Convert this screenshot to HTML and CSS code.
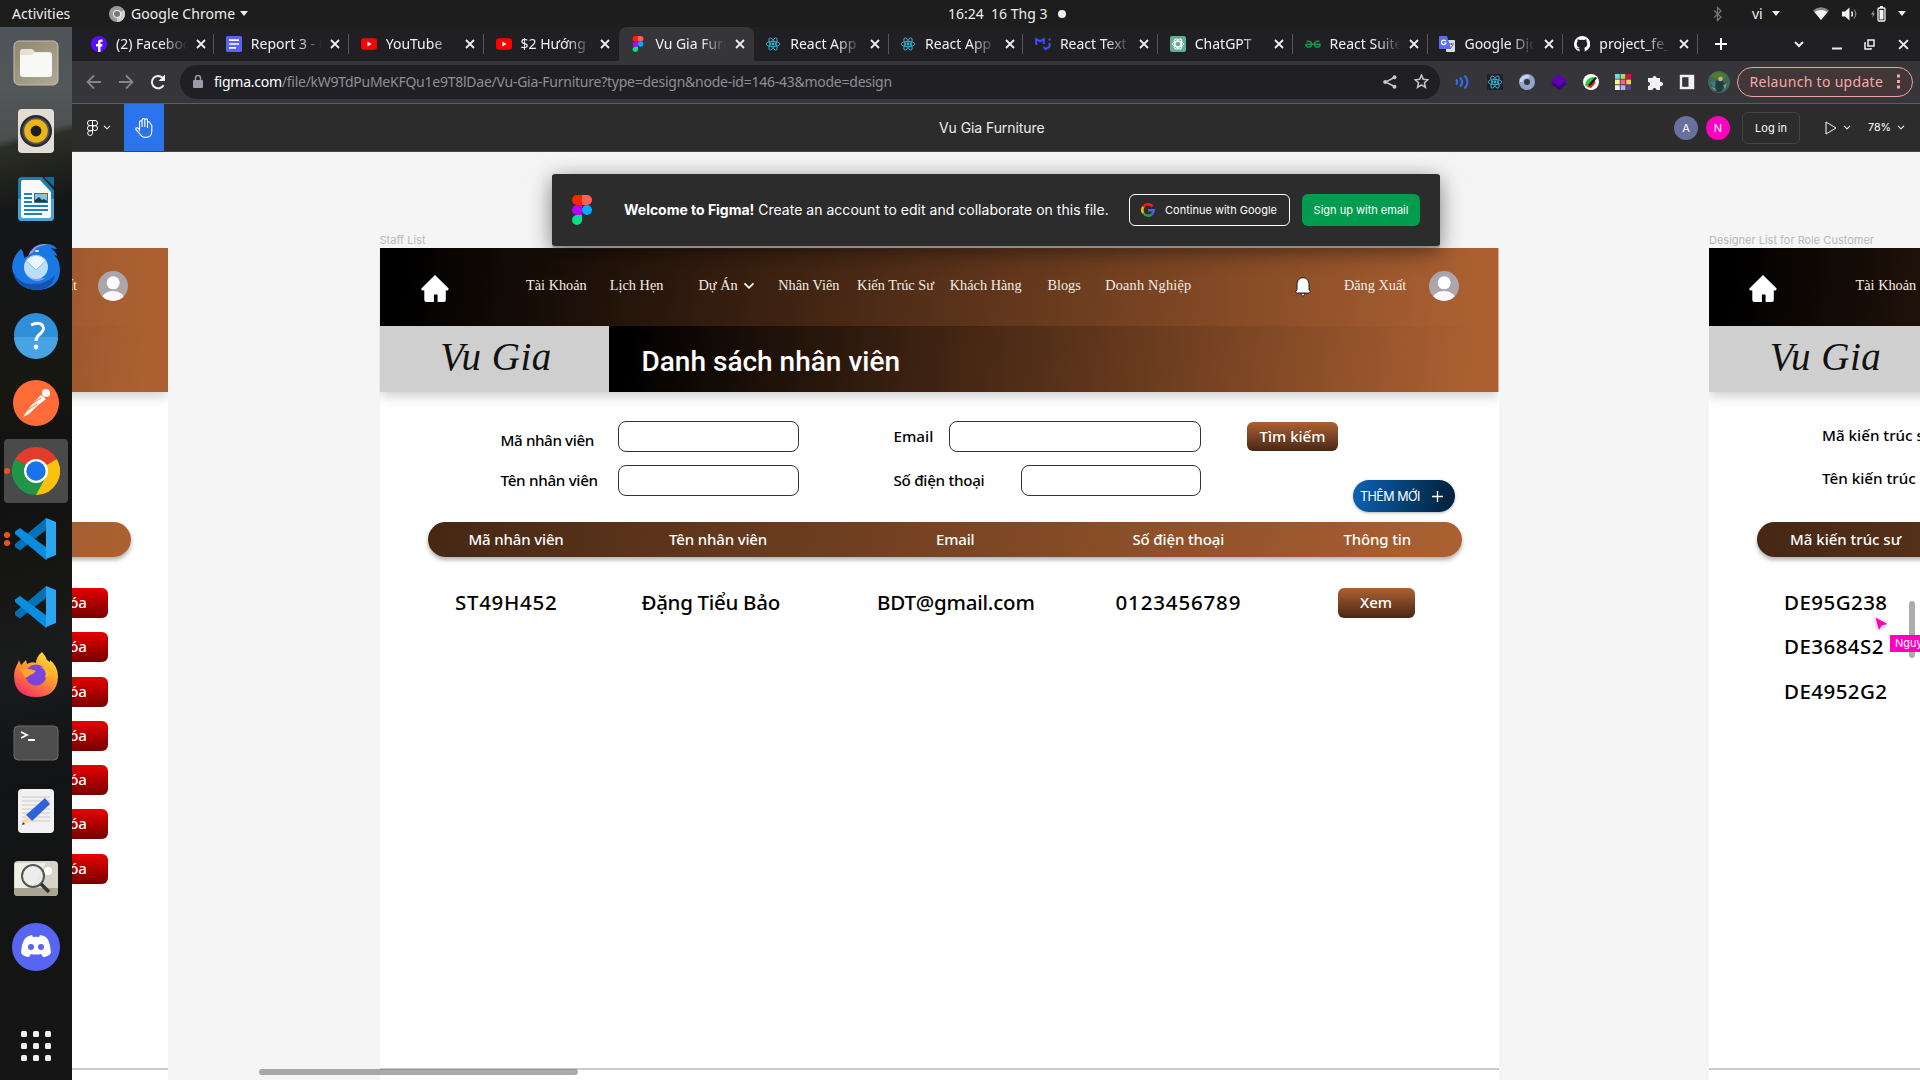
FILE: index.html
```html
<!DOCTYPE html>
<html lang="vi">
<head>
<meta charset="utf-8">
<title>Vu Gia Furniture</title>
<link rel="stylesheet" href="styles.css">
</head>
<body>
<svg class="defs" width="0" height="0">
  <defs>
    <symbol id="close" viewBox="0 0 10 10"><path d="M1 1l8 8M9 1L1 9" stroke="#eee" stroke-width="1.8" fill="none"/></symbol>
    <symbol id="chev" viewBox="0 0 8 5"><path d="M1 .8l3 3 3-3" stroke="currentColor" stroke-width="1.1" fill="none"/></symbol>
    <symbol id="figma" viewBox="0 0 20 30"><path d="M5 0h5v10H5A5 5 0 0 1 5 0z" fill="#ff2400"/><path d="M10 0h5a5 5 0 0 1 0 10h-5z" fill="#ff6058"/><path d="M5 10h5v10H5a5 5 0 0 1 0-10z" fill="#b900ff"/><circle cx="15" cy="15" r="5" fill="#00aeff"/><path d="M5 20h5v5a5 5 0 1 1-5-5z" fill="#00e284"/></symbol>
    <symbol id="react" viewBox="0 0 20 20"><g fill="none" stroke="currentColor" stroke-width="1.1"><ellipse cx="10" cy="10" rx="8.6" ry="3.3"/><ellipse cx="10" cy="10" rx="8.6" ry="3.3" transform="rotate(60 10 10)"/><ellipse cx="10" cy="10" rx="8.6" ry="3.3" transform="rotate(120 10 10)"/></g><circle cx="10" cy="10" r="1.8" fill="currentColor"/></symbol>
    <symbol id="youtube" viewBox="0 0 16 16"><rect y="2.3" width="16" height="11.4" rx="3" fill="#f00"/><path d="M6.4 5.6L10.6 8l-4.2 2.4z" fill="#fff"/></symbol>
    <symbol id="home" viewBox="0 0 28 27"><path d="M14 0L27.4 13.2q.8 1.6-1 2.3h-1.6V25q0 2-2 2h-6.200V19.500h-3.700V27H5.300q-2 0-2-2v-9.500H1.600q-2-.7-1-2.300z" fill="#fff"/></symbol>
    <symbol id="person" viewBox="0 0 30 30"><clipPath id="pc"><circle cx="15" cy="15" r="15"/></clipPath><g clip-path="url(#pc)"><rect width="30" height="30" fill="#aba6ac"/><circle cx="15.200" cy="11.800" r="6.500" fill="#fff"/><ellipse cx="15" cy="28.500" rx="11.500" ry="8.500" fill="#fdf8fd"/></g></symbol>
    <symbol id="vscode" viewBox="0 0 42 42"><path d="M0 29l5 3.500L31 12V0L0 26z" fill="#0670b4"/><path d="M0 13.500L5 10l27 20v11l-1 1L0 16z" fill="#0a8ddc"/><path d="M31 0l10 4v33l-10 4z" fill="#2aa7f0"/></symbol>
  </defs>
</svg>

<header class="topbar">
  <span class="activities">Activities</span>
  <svg class="top-chrome" viewBox="0 0 16 16"><circle cx="8" cy="8" r="8" fill="#999"/><path d="M8 8l7-4a8 8 0 0 1-7 12z" fill="#d0d0d0"/><circle cx="8" cy="8" r="4" fill="#eee"/><circle cx="8" cy="8" r="3" fill="#777"/></svg>
  <span class="app-name">Google Chrome</span>
  <i class="tri"></i>
  <span class="clock">16:24&nbsp; 16 Thg 3</span>
  <i class="dot"></i>
  <div class="tray">
    <svg width="9" height="16" viewBox="0 0 9 16"><path d="M1 4.500l7 6.500-3.500 3.500v-13L8 5l-7 6.500" fill="none" stroke="#777" stroke-width="1.200"/></svg>
    <span class="vi">vi</span><i class="tri"></i>
    <svg class="wifi" width="16" height="13" viewBox="0 0 16 13"><path d="M0 3.500Q8-3 16 3.500L8 13z" fill="#888"/><path d="M1.500 5Q8 1 14.500 5L8 13z" fill="#f2f2f2"/></svg>
    <svg class="vol" width="15" height="14" viewBox="0 0 15 14"><path d="M0 4.500h3L7.500.500v13L3 9.500H0z" fill="#f2f2f2"/><path d="M9.500 4.500q2 2.500 0 5" stroke="#f2f2f2" fill="none" stroke-width="1.400"/><path d="M12 2.500q3.500 4.500 0 9" stroke="#888" fill="none" stroke-width="1.200"/></svg>
    <svg class="bat" width="15" height="16" viewBox="0 0 15 16"><path d="M3 4L0 8.500h2L1 12l3-4.500H2.300z" fill="#999"/><rect x="7" y="2" width="7" height="13" rx="1" fill="none" stroke="#f2f2f2" stroke-width="1.300"/><rect x="8.500" y="4" width="4" height="9.500" fill="#f2f2f2"/><rect x="9" width="3" height="2" fill="#f2f2f2"/></svg>
    <i class="tri"></i>
  </div>
</header>

<div class="desktop">
<aside class="dock">
  <div class="app"><svg viewBox="0 0 48 48"><defs><linearGradient id="fo" x2="1" y2="1"><stop stop-color="#8f876f"/><stop offset="1" stop-color="#b0a894"/></linearGradient></defs><rect x="2" y="2" width="44" height="44" rx="5" fill="url(#fo)" stroke="#c6bfae"/><path d="M8 13q0-3 3-3h8q2 0 4 3h14q3 0 3 3v18H8z" fill="#e4e0d6"/><rect x="8" y="13.500" width="32" height="24.500" rx="3" fill="#f8f8f7"/><path d="M8 16v-3q0-3 3-3h9l3 3.500q-2 2.500-5 2.500z" fill="#e4e0d6"/></svg></div>
  <div class="app"><svg viewBox="0 0 48 48"><rect x="6" y="2" width="36" height="44" rx="4" fill="#e3ded3"/><circle cx="24" cy="24" r="16" fill="#2a2a35"/><circle cx="24" cy="24" r="13.500" fill="#50515c"/><circle cx="24" cy="24" r="11.800" fill="#e9b612"/><circle cx="24" cy="24" r="5.400" fill="#1d1e20"/></svg></div>
  <div class="app"><svg viewBox="0 0 48 48"><path d="M10 2h20l12 13v27q0 4-4 4H10q-4 0-4-4V6q0-4 4-4z" fill="#1a7fb0"/><path d="M6 24h36v18q0 4-4 4H10q-4 0-4-4z" fill="#4aa5d4"/><path d="M32 2h10v10z" fill="#0f6c9c"/><path d="M11 5h17l11 12v24q0 2-2 2H11q-2 0-2-2V7q0-2 2-2z" fill="#fafafa"/><path d="M12 19h8M12 23h8M12 27h8M12 31h24M12 35h24M12 39h18" stroke="#1b82bb" stroke-width="2"/><rect x="22" y="18" width="14" height="10" fill="#1b75ac"/><rect x="23" y="19" width="12" height="8" fill="#7cc5ee"/><path d="M23 27v-2l4-3 3 3 2-1 3 2v1z" fill="#333"/><path d="M31 19h4v3z" fill="#f2c037"/></svg></div>
  <div class="app"><svg viewBox="0 0 48 48"><path d="M1 29C-2 20 4 10 9 6q3 3 3 9l6-3Q24 0 34 1q8 0 11 5-3 0-6-1 6 5 6 8l-3-1q6 5 6 15-1 20-24 20Q6 46 1 29z" fill="#1878e4"/><path d="M1 29q7 13 20 12 14 0 22-9Q40 47 24 47 5 46 1 29z" fill="#1552b4"/><path d="M16 13Q22 -1 36 1.500q-12 1-15 8z" fill="#9f8cf0"/><path d="M12 26q2 10 12 12 5 1 9-3-8 1-13-6z" fill="#8f8cf5"/><circle cx="24" cy="24" r="12" fill="#b9def8"/><path d="M14 17.500l10 9.500 10-9.500q-4-5-10-5.500-6 .5-10 5.500z" fill="#e9f6ff" stroke="#7ab4e4" stroke-width=".8"/><ellipse cx="25" cy="8" rx="2" ry="1" fill="#fff"/></svg></div>
  <div class="app"><svg viewBox="0 0 48 48"><circle cx="24" cy="24" r="22" fill="#2f8fd8"/><path d="M2 26h44a22 22 0 0 1-44 0z" fill="#48a3e2"/><path d="M19 14q6-3 10-1 5 4 0 9-5 4-5 8" fill="none" stroke="#fff" stroke-width="3"/><circle cx="24" cy="36" r="2.400" fill="#fff"/></svg></div>
  <div class="app"><svg viewBox="0 0 48 48"><circle cx="24" cy="24" r="23" fill="#ff6c37"/><circle cx="34" cy="14" r="4" fill="#fff"/><path d="M29 16l5 4-9 7-8 8-6 3 4-6 7-9z" fill="#fff"/><path d="M20 25l9-6M16 31l9-6" stroke="#ff6c37"/></svg></div>
  <div class="app active"><i class="run"></i><svg viewBox="0 0 48 48"><path d="M24 24L3.200 12A24 24 0 0 1 44.800 12z" fill="#e33b2e"/><path d="M24 24h0L44.800 12A24 24 0 0 1 24 48z" fill="#fcc10f"/><path d="M24 24l0 24A24 24 0 0 1 3.200 12z" fill="#239547"/><path d="M34 30L24 48l-5-14z" fill="#239547"/><path d="M24 12h20.800L34 16z" fill="#e33b2e"/><circle cx="24" cy="24" r="12" fill="#fff"/><circle cx="24" cy="24" r="9.700" fill="#1a73e8"/></svg></div>
  <div class="app"><i class="run up"></i><i class="run down"></i><svg class="code"><use href="#vscode"/></svg></div>
  <div class="app"><svg class="code"><use href="#vscode"/></svg></div>
  <div class="app"><svg viewBox="0 0 48 48"><defs><linearGradient id="fx" x1=".8" x2=".2" y2="1"><stop stop-color="#ffe63e"/><stop offset=".45" stop-color="#ff9a2a"/><stop offset="1" stop-color="#f4286a"/></linearGradient></defs><path d="M24 12q0-6 6-11 3 3 5 8l3 2v-2q8 6 8 17-1 20-22 20T2 26q0-8 4-14l1-3 2 5 5-5 1 4q5-3 9-1z" fill="url(#fx)"/><circle cx="24" cy="24" r="10.500" fill="#7a45d8"/><path d="M8 18q9-1 16 2-2 3-6 4-4 4-6 1z" fill="#ffa62e"/><path d="M28 16q8 3 5 11l6-5q-1-6-11-6z" fill="#ffb52c"/></svg></div>
  <div class="app"><svg viewBox="0 0 48 48"><rect x="2" y="7" width="44" height="34" rx="4" fill="#4d4d4d" stroke="#6b6b6b"/><path d="M9 13l6 3-6 3M16 21h7" stroke="#fff" stroke-width="1.800" fill="none"/></svg></div>
  <div class="app"><svg viewBox="0 0 48 48"><rect x="6" y="2" width="36" height="44" rx="4" fill="#f1f1f1"/><path d="M10 10h28M10 14h28M10 18h28M10 22h28M10 26h28M10 30h28M10 34h28" stroke="#c9c9c9"/><path d="M33 11l5 6-18 17-6-6z" fill="#2f61d8"/><path d="M14 28l6 6-10 4z" fill="#fbd9b4"/><path d="M10 38l1-3 2 2z" fill="#333"/></svg></div>
  <div class="app"><svg viewBox="0 0 48 48"><rect x="2" y="6" width="44" height="35" rx="4" fill="#d6d4c6"/><path d="M4 8h30L18 34H3V9z" fill="#f0efe6"/><path d="M2 33h44v4q0 4-4 4H6q-4 0-4-4z" fill="#aaa592"/><circle cx="36" cy="16" r="4" fill="#fff"/><circle cx="21" cy="21" r="11" fill="#ececea" fill-opacity=".85" stroke="#555" stroke-width="2"/><path d="M29 29l8 8" stroke="#333" stroke-width="3.500"/></svg></div>
  <div class="app"><svg viewBox="0 0 48 48"><circle cx="24" cy="24" r="24" fill="#5865f2"/><path d="M17 13l3-1 1 2q3-.5 6 0l1-2 4 1q6 2 7 17-3 4-8 4l-2-3q-5 1-10 0l-2 3q-5 0-8-4 1-15 8-17z" fill="#fff"/><circle cx="19" cy="24" r="3" fill="#5865f2"/><circle cx="29" cy="24" r="3" fill="#5865f2"/></svg></div>
  <div class="grid-btn"><i></i><i></i><i></i><i></i><i></i><i></i><i></i><i></i><i></i></div>
</aside>

<main class="browser">
  <div class="tabs">
    <div class="tab"><svg class="fav" viewBox="0 0 16 16"><circle cx="8" cy="8" r="8" fill="#5a0cff"/><path d="M7 16v-5.500H5V8h2V6.500Q7 3.500 10 3.500h1.500v2.200H10.400Q9.500 5.700 9.500 6.700V8h2l-.4 2.500H9.500V16z" fill="#fff"/></svg><span class="ttl">(2) Facebook</span><svg class="x"><use href="#close"/></svg></div>
    <div class="tab"><svg class="fav" viewBox="0 0 16 16"><rect width="16" height="16" rx="1.500" fill="#5b62f4"/><path d="M3 4.200h10M3 8h10M3 11.800h7" stroke="#fff" stroke-width="1.700"/></svg><span class="ttl">Report 3 - Group</span><svg class="x"><use href="#close"/></svg></div>
    <div class="tab"><svg class="fav"><use href="#youtube"/></svg><span class="ttl">YouTube</span><svg class="x"><use href="#close"/></svg></div>
    <div class="tab last"><svg class="fav"><use href="#youtube"/></svg><span class="ttl">$2 Hướng dẫn</span><svg class="x"><use href="#close"/></svg></div>
    <div class="tab on"><svg class="fav"><use href="#figma"/></svg><span class="ttl">Vu Gia Furniture</span><svg class="x"><use href="#close"/></svg></div>
    <div class="tab"><svg class="fav cyan"><use href="#react"/></svg><span class="ttl">React App</span><svg class="x"><use href="#close"/></svg></div>
    <div class="tab"><svg class="fav cyan"><use href="#react"/></svg><span class="ttl">React App</span><svg class="x"><use href="#close"/></svg></div>
    <div class="tab"><svg class="fav" viewBox="0 0 16 16"><path d="M1.200 9V3L5 5.300 8.800 3v5M8.500 11l2 2 4-2.300V7M14.500 2.500v2" stroke="#3c4fff" stroke-width="2" fill="none"/></svg><span class="ttl">React Text Field</span><svg class="x"><use href="#close"/></svg></div>
    <div class="tab"><svg class="fav" viewBox="0 0 16 16"><rect width="16" height="16" rx="2" fill="#62ad94"/><g fill="none" stroke="#fff"><ellipse cx="8" cy="8" rx="5.500" ry="2.800"/><ellipse cx="8" cy="8" rx="5.500" ry="2.800" transform="rotate(60 8 8)"/><ellipse cx="8" cy="8" rx="5.500" ry="2.800" transform="rotate(120 8 8)"/></g></svg><span class="ttl">ChatGPT</span><svg class="x"><use href="#close"/></svg></div>
    <div class="tab"><svg class="fav" viewBox="0 0 16 16"><path d="M1.500 5.500q5-1 5 2.500t-3 3-2.500-2.500M14.500 5.500q-5-1-5 2.500t3 3 2.500-2.500M.5 8.200h15" stroke="#139a4c" stroke-width="1.500" fill="none"/></svg><span class="ttl">React Suite Form</span><svg class="x"><use href="#close"/></svg></div>
    <div class="tab"><svg class="fav" viewBox="0 0 16 16"><rect x="7" y="4" width="9" height="12" rx="1" fill="#ddd"/><path d="M10 8h5M12.500 7v2M11 13l3-4" stroke="#667" fill="none"/><path d="M1 0h7l4 13H1q-1 0-1-1V1q0-1 1-1z" fill="#5a6cf0"/><path d="M6.800 5.300A2.300 2.300 0 1 0 7 7H5" stroke="#fff" fill="none" stroke-width="1.200"/></svg><span class="ttl">Google Dịch</span><svg class="x"><use href="#close"/></svg></div>
    <div class="tab"><svg class="fav" viewBox="0 0 16 16"><path d="M8 0a8 8 0 0 0-2.500 15.600V13q-2.500.5-3-1.500 2 2 3.200.3Q2.500 11 2.800 7.500q0-1.200.8-2-.3-1.300.1-2.300 1 0 2.300.9 2-.5 4 0 1.300-.9 2.300-.9.400 1 .1 2.300.8.800.8 2 .3 3.500-2.900 4.300.4.500.4 1.500v2.300A8 8 0 0 0 8 0z" fill="#fff"/></svg><span class="ttl">project_fe_vugia</span><svg class="x"><use href="#close"/></svg></div>
    <svg class="plus" viewBox="0 0 12 12"><path d="M6 0v12M0 6h12" stroke="#fff" stroke-width="2"/></svg>
    <div class="win">
      <svg width="10" height="7" viewBox="0 0 10 7"><path d="M1 1l4 4 4-4" stroke="#eee" stroke-width="2" fill="none"/></svg>
      <svg width="10" height="12" viewBox="0 0 10 12"><path d="M0 10.500h10" stroke="#eee" stroke-width="2"/></svg>
      <svg width="11" height="11" viewBox="0 0 11 11"><path d="M4 1h6v6H4zM2 4H1v6h6V9" stroke="#eee" stroke-width="1.500" fill="none"/></svg>
      <svg width="11" height="11"><use href="#close"/></svg>
    </div>
  </div>

  <div class="toolbar">
    <svg class="nav-ic" viewBox="0 0 16 16"><path d="M15 8H2M8 1.500L1.500 8 8 14.500" stroke="#85868a" stroke-width="1.800" fill="none"/></svg>
    <svg class="nav-ic" viewBox="0 0 16 16"><path d="M1 8h13M8 1.500L14.500 8 8 14.500" stroke="#85868a" stroke-width="1.800" fill="none"/></svg>
    <svg class="nav-ic" viewBox="0 0 16 16"><path d="M13.500 11.200A6.200 6.200 0 1 1 12.500 3.700L14 5.500" stroke="#f2f2f2" stroke-width="2" fill="none"/><path d="M15 .5V7H8.600z" fill="#f2f2f2"/></svg>
    <div class="omni">
      <svg class="lock" viewBox="0 0 10 13"><rect y="5" width="10" height="8" rx="1" fill="#9a9ba5"/><path d="M2.500 5V3a2.500 2.500 0 0 1 5 0v2" stroke="#9a9ba5" stroke-width="1.500" fill="none"/></svg>
      <span class="url"><b>figma.com</b>/file/kW9TdPuMeKFQu1e9T8lDae/Vu-Gia-Furniture?type=design&amp;node-id=146-43&amp;mode=design</span>
      <svg class="share" viewBox="0 0 14 14"><path d="M11.500 2.500L2.500 7l9 4.500" stroke="#c8c8cc" stroke-width="1.400" fill="none"/><circle cx="11.500" cy="2.300" r="2" fill="#c8c8cc"/><circle cx="2.200" cy="7" r="2" fill="#c8c8cc"/><circle cx="11.500" cy="11.700" r="2" fill="#c8c8cc"/></svg>
      <svg class="star" viewBox="0 0 14 14"><path d="M7 1l1.700 4 4.300.4-3.300 2.800 1 4.300L7 10.200 3.300 12.500l1-4.300L1 5.400 5.300 5z" stroke="#c8c8cc" stroke-width="1.400" fill="none"/></svg>
    </div>
    <div class="exts">
      <svg viewBox="0 0 16 16"><path d="M1 5.500q2.500 2.500 0 5M5 3.500q4.500 4.500 0 9M9.500 1.500q6 6.500 0 13" stroke="#2e72ec" stroke-width="2" fill="none"/></svg>
      <svg class="cyan dark"><use href="#react"/></svg>
      <svg viewBox="0 0 16 16"><circle cx="8" cy="8" r="5.500" fill="none" stroke="#8ea6cc" stroke-width="5"/><path d="M2 8a6 6 0 0 1 8-5" stroke="#c9d7ec" stroke-width="3" fill="none"/></svg>
      <svg viewBox="0 0 16 16"><path d="M8 4l8 6-8 6-8-6z" fill="#35057f"/><path d="M8 0l8 6.500L8 13 0 6.500z" fill="#5d00b0"/></svg>
      <svg viewBox="0 0 16 16"><circle cx="8" cy="8" r="8" fill="#fff"/><path d="M2 11Q3 4 10 3l2 1-8 9z" fill="#1fd32c"/><path d="M4 13l7-8q4 3-3 9z" fill="#e8231c"/><path d="M5 11l7-8 2 1-7 8z" fill="#15120f"/></svg>
      <svg viewBox="0 0 15 15"><path d="M0 0h4.500v4.500H0z" fill="#7fd0f2"/><path d="M5.200 0h4.500v4.500H5.200z" fill="#a3de5d"/><path d="M10.500 0H15v4.500h-4.500z" fill="#f5004f"/><path d="M0 5.200h4.500v4.500H0z" fill="#fff38f"/><path d="M5.200 5.200h4.500v4.500H5.200z" fill="#ff5b9b"/><path d="M10.500 5.200H15v4.500h-4.500z" fill="#ffcb4d"/><path d="M0 10.500h4.500V15H0z" fill="#efeaf8"/><path d="M5.200 10.500h4.500V15H5.200z" fill="#b9b3e3"/><path d="M10.500 10.500H15V15h-4.500z" fill="#4c4b86"/></svg>
      <svg viewBox="0 0 16 16"><path d="M1 4h4.500a2 2 0 1 1 4 0H13v4a2.200 2.200 0 1 1 0 4v4H9.500a2 2 0 1 0-4 0H1v-4a2 2 0 1 0 0-4z" fill="#f2f2f2"/></svg>
      <svg viewBox="0 0 16 16"><rect x="2" y="2" width="12" height="12" fill="none" stroke="#f2f2f2" stroke-width="2.400"/><rect x="9.500" y="2" width="5" height="12" fill="#f2f2f2"/></svg>
    </div>
    <svg class="me" viewBox="0 0 22 22"><circle cx="11" cy="11" r="11" fill="#41655a"/><path d="M2 5l6-4 6 1 5 4-6 3-6-1z" fill="#4f7c2f"/><path d="M8 10l6-2 3 6-4 7H7z" fill="#223a42"/><path d="M2 12l5-2v6z" fill="#3a7d9c"/><circle cx="12.500" cy="8" r="2.300" fill="#c6b184"/><path d="M3 16l4 1 2 4zM15 14l4-1-2 5z" fill="#7aa06d"/></svg>
    <div class="relaunch"><span>Relaunch to update</span><i></i></div>
  </div>

  <div class="figbar">
    <div class="fig-menu"><svg class="fig-logo" viewBox="0 0 11 16"><path d="M5.500.5v12.700a2.400 2.400 0 1 1-2.500-2.500h2.500M5.500.5H3a2.500 2.500 0 0 0 0 5.100h5a2.500 2.500 0 0 0 0-5.100zM5.500 5.600H3a2.500 2.500 0 0 0 0 5.100h2.500" stroke="#fff" fill="none"/><circle cx="8" cy="8.100" r="2.500" stroke="#fff" fill="none"/></svg><svg class="chev"><use href="#chev"/></svg></div>
    <div class="hand"><svg viewBox="0 0 18 20"><path d="M4.500 12V4a1.200 1.200 0 0 1 2.600 0v5V2a1.300 1.300 0 0 1 2.700 0v7-7a1.300 1.300 0 0 1 2.700.5V10 5a1.200 1.200 0 0 1 2.500 0l1.800 2.500V13q0 6.400-6 6.400-4 0-6.300-3.900L1 11.700Q.3 10 1.800 9.800 3.200 9.700 4.500 12z" stroke="#fff" stroke-width="1.100" fill="none"/></svg></div>
    <span class="doc">Vu Gia Furniture</span>
    <div class="fig-right">
      <i class="av a">A</i><i class="av n">N</i>
      <span class="login">Log in</span>
      <svg class="play" viewBox="0 0 12 14"><path d="M1 1l10 6-10 6z" stroke="#fff" fill="none"/></svg>
      <svg class="chev"><use href="#chev"/></svg>
      <span class="zoom">78%</span>
      <svg class="chev"><use href="#chev"/></svg>
    </div>
  </div>

  <div class="canvas">
    <section class="frame f-left">
      <div class="hd"><div class="h1row end"><span>Đăng Xuất</span><svg class="person"><use href="#person"/></svg></div><div class="h2row"><div class="logo"></div><h1></h1></div></div>
      <div class="thead"></div>
      <div class="dels">
        <button class="del">Xóa</button><button class="del">Xóa</button><button class="del">Xóa</button><button class="del">Xóa</button><button class="del">Xóa</button><button class="del">Xóa</button><button class="del">Xóa</button>
      </div>
      <div class="edge"></div>
    </section>

    <section class="frame f-mid">
      <span class="name">Staff List</span>
      <div class="hd">
        <nav class="h1row">
          <svg class="home"><use href="#home"/></svg>
          <span>Tài Khoản</span><span>Lịch Hẹn</span><span>Dự Án <svg class="chev big"><use href="#chev"/></svg></span><span>Nhân Viên</span><span>Kiến Trúc Sư</span><span>Khách Hàng</span><span>Blogs</span><span class="wide-txt">Doanh Nghiệp</span>
          <svg class="bell" viewBox="0 0 16 20"><path d="M8 .8C4 .8 2 4 2 8v4.500L.8 14.500q0 1.500 1.500 1.500h11.400q1.500 0 1.500-1.500L14 12.500V8C14 4 12 .8 8 .8z" fill="#fff" stroke="#111" stroke-width=".9"/><path d="M5.800 16.500h4.400L8 19.300z" fill="#fff" stroke="#111" stroke-width=".7"/></svg>
          <span>Đăng Xuất</span><svg class="person"><use href="#person"/></svg>
        </nav>
        <div class="h2row"><div class="logo">Vu Gia</div><h1>Danh sách nhân viên</h1></div>
      </div>
      <div class="form">
        <label class="low">Mã nhân viên</label><i class="in"></i><label class="c2 mail">Email</label><i class="in wide"></i><button class="btn find">Tìm kiếm</button>
        <label>Tên nhân viên</label><i class="in"></i><label class="c2">Số điện thoại</label><i class="in short"></i><button class="add"><span>THÊM MỚI</span><svg viewBox="0 0 12 12"><path d="M6 0v12M0 6h12" stroke="#fff" stroke-width="1.500"/></svg></button>
      </div>
      <div class="thead cols"><span>Mã nhân viên</span><span>Tên nhân viên</span><span>Email</span><span>Số điện thoại</span><span>Thông tin</span></div>
      <div class="row"><span class="r1">ST49H452</span><span class="r2">Đặng Tiểu Bảo</span><span class="r3">BDT@gmail.com</span><span class="r4">0123456789</span><button class="btn view">Xem</button></div>
      <div class="edge"></div>
    </section>

    <section class="frame f-right">
      <span class="name">Designer List for Role Customer</span>
      <div class="hd">
        <nav class="h1row"><svg class="home"><use href="#home"/></svg><span>Tài Khoản</span></nav>
        <div class="h2row"><div class="logo">Vu Gia</div><h1></h1></div>
      </div>
      <div class="form right"><label>Mã kiến trúc sư</label><label>Tên kiến trúc sư</label></div>
      <div class="thead one"><span>Mã kiến trúc sư</span></div>
      <div class="ids"><span>DE95G238</span><span>DE3684S2</span><span>DE4952G2</span></div>
      <div class="edge"></div>
    </section>

    <div class="banner">
      <svg class="b-logo"><use href="#figma"/></svg>
      <p><b>Welcome to Figma!</b> Create an account to edit and collaborate on this file.</p>
      <span class="b-google"><svg viewBox="0 0 14 14"><g fill="none" stroke-width="2.600"><path d="M11.500 3.300A5.700 5.700 0 0 0 2.300 3.900" stroke="#f21d1d"/><path d="M2.300 3.900a5.700 5.700 0 0 0 0 6.200" stroke="#f5b400"/><path d="M2.300 10.100A5.700 5.700 0 0 0 10.600 11.400" stroke="#18a33c"/><path d="M10.600 11.400A5.500 5.500 0 0 0 12.600 7.200H7" stroke="#4a60f5"/></g></svg>Continue with Google</span>
      <span class="b-sign">Sign up with email</span>
    </div>
    <i class="hbar"></i><i class="vbar"></i>
    <svg class="cursor" viewBox="0 0 13 13"><path d="M.5.5l12 6.500-6 1.500-2.500 4.500z" fill="#ff00bf"/></svg>
    <span class="who">Nguyen</span>
  </div>
</main>
</div>
</body>
</html>
```
FILE: styles.css
```css
* { box-sizing: border-box; }
body { margin: 0; width: 1920px; height: 1080px; overflow: hidden; background: #1d1d1d; font-family: "Noto Sans", sans-serif; display: flex; flex-direction: column; }
svg { flex: none; display: block; }
i { font-style: normal; flex: none; }
button { border: 0; padding: 0; font-family: inherit; color: #fff; }
.defs { position: absolute; }

/* desktop top bar */
.topbar { height: 27px; flex: none; display: flex; align-items: center; color: #eee; font-size: 14px; padding-left: 12px; white-space: nowrap; }
.topbar span { padding-bottom: 1px; }
.activities { width: 97px; }
.top-chrome { width: 16px; height: 16px; margin-right: 6px; }
.app-name { width: 109px; letter-spacing: .06px; }
.tri { border: 4.500px solid transparent; border-top: 5.500px solid #eee; border-bottom: 0; }
.clock { margin-left: 700px; width: 110px; }
.dot { width: 8px; height: 8px; border-radius: 50%; background: #f2f2f2; }
.tray { margin-left: auto; width: 207px; display: flex; align-items: center; }
.vi { margin: 0 9px 0 30px; }
.wifi { margin-left: 33px; }
.vol { margin-left: 13px; }
.bat { margin: 0 12px 0 14px; }

.desktop { flex: 1; display: flex; min-height: 0; }

/* dock */
.dock { width: 72px; flex: none; padding-top: 2px; background: linear-gradient(166deg, transparent 110px, #2c2f28 118px, #24261f 140px, #161718 180px, #151617 260px, #171812 350px, #0f1011 440px, #161612 540px, #1a1b1c 620px, #121314 740px, #151515), linear-gradient(#4d5358, #54575a 60px, #4c4e50 110px); display: flex; flex-direction: column; }
.app { height: 68px; flex: none; display: flex; align-items: center; justify-content: center; position: relative; }
.app svg { width: 48px; height: 48px; }
.app svg.code { width: 42px; height: 42px; }
.active::before { content: ""; position: absolute; inset: 2px 4px; border-radius: 4px; background: #4a4a4a; }
.active svg { position: relative; }
.run { position: absolute; left: 4px; top: 31px; width: 6px; height: 6px; border-radius: 50%; background: #e95420; }
.run.up { top: 27px; }
.run.down { top: 35px; }
.grid-btn { display: grid; grid-template-columns: repeat(3, 6px); gap: 6px; margin: 50px 0 0 21px; }
.grid-btn i { width: 6px; height: 6px; border-radius: 1.500px; background: #eee; }

.browser { flex: 1; min-width: 0; display: flex; flex-direction: column; }

/* tab strip */
.tabs { height: 34px; flex: none; display: flex; align-items: center; background: #202024; padding-left: 7.500px; }
.tab { width: 134.850px; height: 34px; flex: none; display: flex; align-items: center; padding: 0 0 1px 11.500px; position: relative; }
.tab::after { content: ""; position: absolute; right: 0; top: 7px; width: 1px; height: 20px; background: #55565b; }
.tab.on { background: #36363a; border-radius: 8px 8px 0 0; }
.tab.on::after, .tab.last::after { display: none; }
.fav { width: 16px; height: 16px; }
.cyan { color: #3bb5d6; }
.ttl { width: 71px; margin: 0 8.500px 1px 9px; overflow: hidden; white-space: nowrap; color: #f2f2f2; font-size: 14px; -webkit-mask: linear-gradient(90deg, #000 65%, transparent); mask: linear-gradient(90deg, #000 65%, transparent); }
.x { width: 10px; height: 10px; }
.plus { width: 12px; height: 12px; margin-left: 17px; }
.win { margin-left: auto; width: 126.500px; display: flex; align-items: center; gap: 28px; }
.win svg:nth-child(3) { margin: 0 -5px 0 -6px; }

/* address bar */
.toolbar { height: 43px; flex: none; background: #36363a; border-bottom: 1px solid #5c5d62; display: flex; align-items: center; padding: 0 0 1px 14px; }
.nav-ic { width: 16px; height: 16px; margin-right: 16px; }
.omni { width: 1260px; margin-left: -2px; height: 34px; background: #202024; border-radius: 17px; display: flex; align-items: center; padding: 0 11px 0 13px; }
.lock { width: 10px; height: 13px; margin-right: 11px; }
.url { font-size: 14px; color: #8e8f94; white-space: nowrap; letter-spacing: -.250px; }
.url b { color: #fff; font-weight: 400; }
.share { width: 14px; height: 14px; margin-left: auto; }
.star { width: 15px; height: 15px; margin-left: 17px; }
.exts { display: flex; gap: 16px; margin-left: 15px; }
.exts svg { width: 16px; height: 16px; }
.dark { background: #1f2226; }
.me { width: 22px; height: 22px; margin-left: 12.500px; }
.relaunch { margin-left: 7px; width: 176px; height: 30px; border: 1.200px solid #f0a09e; border-radius: 15px; background: #433639; color: #f5aaa7; font-size: 14px; display: flex; align-items: center; justify-content: space-between; padding: 0 12px; white-space: nowrap; }
.relaunch span { letter-spacing: .3px; }
.relaunch i { width: 3px; height: 3px; background: #f5aaa7; box-shadow: 0 -5.500px #f5aaa7, 0 5.500px #f5aaa7; }

/* editor toolbar */
.figbar { height: 48px; flex: none; background: #2c2c2c; border-bottom: 1px solid #444; display: flex; align-items: center; font-family: Inter, sans-serif; color: #fff; }
.fig-menu { width: 52px; padding-left: 15px; display: flex; align-items: center; gap: 5px; }
.fig-logo { width: 11px; height: 16px; }
.chev { width: 8px; height: 5px; color: #fff; }
.hand { width: 40px; height: 47px; background: #2b74ee; display: flex; align-items: center; justify-content: center; }
.hand svg { width: 18px; height: 20px; margin-right: 1px; }
.doc { margin-left: 775px; font-size: 14px; color: #eee; white-space: nowrap; letter-spacing: -.080px; }
.fig-right { margin-left: auto; width: 246px; display: flex; align-items: center; font-size: 11px; white-space: nowrap; }
.av { width: 24px; height: 24px; border-radius: 50%; line-height: 24px; text-align: center; margin-right: 8px; }
.a { background: #69709c; }
.n { background: #ff00bf; }
.login { width: 58px; height: 32px; margin-left: 4px; border: 1px solid #444; border-radius: 6px; line-height: 30px; text-align: center; }
.play { width: 12px; height: 16px; margin: 0 6px 0 25px; }
.zoom { margin: 0 6px 0 17px; font-size: 10.700px; }

/* canvas */
.canvas { flex: 1; position: relative; overflow: hidden; background: #f5f5f5; }
.frame { position: absolute; top: 96px; width: 1119px; bottom: 0; background: #fff; display: flex; flex-direction: column; font-size: 15px; font-weight: 500; color: #000; white-space: nowrap; }
.f-left { left: -1023px; }
.f-mid { left: 307.500px; }
.f-right { left: 1637px; }
.name { position: absolute; top: -16px; left: 0; font: 11px/16px Inter, sans-serif; color: #b9b9b9; }
.hd { height: 143.500px; flex: none; box-shadow: 0 4px 12px rgba(0,0,0,.2); clip-path: inset(0 0 -24px 0); }
.h1row { height: 77.500px; background: linear-gradient(97deg, #000 2%, #ad6132 98%); display: grid; grid-template-columns: 105.500px 83.800px 88.700px 79.700px 78.900px 92.700px 97.700px 57.700px 186.500px 52.300px 85px 30px; padding: 0 0 2px 41px; align-items: center; color: #f4ece4; font: 14.300px "Liberation Serif", serif; }
.h1row.end { display: flex; justify-content: flex-end; padding-right: 40px; gap: 21px; }
.wide-txt { letter-spacing: .2px; }
.home { width: 28px; height: 27px; margin-top: 5px; }
.f-right .home { margin-left: -1px; }
.big { display: inline-block; width: 12px; height: 8px; margin-left: 2px; }
.bell { width: 16px; height: 20px; margin-left: 3px; margin-top: 2px; }
.person { width: 30px; height: 30px; margin-top: 1px; }
.h2row { height: 66px; display: flex; background: linear-gradient(97deg, #000 22%, #ad6132 98%); }
.logo { width: 229px; background: #cfcfcf; color: #111; font: italic 39px/62px "Liberation Serif", cursive; letter-spacing: .5px; text-align: center; padding-left: 4px; }
h1 { margin: 0 0 0 33px; color: #fff; font: 500 28px/71px Roboto, sans-serif; }

/* search form */
.form { display: flex; flex-wrap: wrap; align-content: flex-start; align-items: center; row-gap: 12px; width: 990px; height: 95px; margin: 29.500px 0 0 121px; }
.form label { width: 117.500px; font-size: 15.200px; line-height: 28px; padding-bottom: 2px; letter-spacing: -.3px; }
.form label.low { padding: 6px 0 0; line-height: 22px; letter-spacing: -.4px; }
.form label.c2 { width: 55.500px; margin-left: 95px; }
.form label.mail { letter-spacing: 0; }
.in { width: 180.500px; height: 31px; border: 1px solid #333; border-radius: 8px; }
.in.wide { width: 252px; }
.in.short { margin-left: 71.500px; }
.btn { border-radius: 6px; background: linear-gradient(#ad6132, #482715); font-size: 15px; font-weight: 500; padding-bottom: 2px; }
.find { width: 91px; height: 29px; margin: 0 120px 0 46px; }
.add { width: 102px; height: 32px; margin: 33px 0 -32px 152px; border-radius: 16px; background: linear-gradient(97deg, #0c62b4, #012543 90%); box-shadow: 0 1px 3px rgba(0,0,0,.3); display: flex; align-items: center; justify-content: space-between; align-self: flex-start; position: relative; top: -17px; padding: 0 12px 0 7px; font: 12.500px Inter, sans-serif; letter-spacing: -.5px; }
.add svg { width: 11px; height: 11px; }

/* staff table */
.thead { height: 35px; flex: none; margin: 6px 37px 0 48px; border-radius: 18px; background: linear-gradient(95deg, #452714, #ad6132); box-shadow: 0 3px 4px rgba(0,0,0,.3); color: #fff; font-size: 15px; padding-bottom: 1px; align-items: center; }
.f-left .thead { margin-top: 130.500px; }
.thead.cols { display: grid; grid-template-columns: 200.500px 267px 196.500px 211px auto; padding-left: 41px; }
.thead.cols span { letter-spacing: -.15px; }
.row { display: flex; height: 30px; margin: 30.500px 0 0 75.500px; align-items: center; font-size: 20.500px; }
.row span { padding-bottom: 1px; }
.r1 { width: 186.500px; letter-spacing: .7px; }
.r2 { width: 235.500px; letter-spacing: -.3px; }
.r3 { width: 238.500px; letter-spacing: -.2px; }
.r4 { width: 222px; letter-spacing: .85px; }
.view { width: 77px; height: 30px; }
.edge { margin-top: auto; height: 12px; flex: none; border-top: 2px solid #cbcbcb; }
.dels { display: flex; flex-direction: column; align-items: flex-end; gap: 14.300px; padding: 31px 60px 0 0; }
.del { width: 77px; height: 30px; border-radius: 6px; background: linear-gradient(#e60000, #780000); font-size: 15px; font-weight: 500; text-align: center; padding: 0 0 2px 8px; }
.form.right { flex-direction: column; align-items: flex-start; width: 900px; margin-left: 113px; flex-wrap: nowrap; gap: 13px; }
.form.right label { width: 200px; letter-spacing: 0; }
.thead.one { display: flex; padding-left: 33px; }
.ids { display: flex; flex-direction: column; margin: 23px 0 0 75px; font-size: 20.500px; line-height: 44.300px; letter-spacing: .450px; }

/* sign-up banner */
.banner { position: absolute; left: 480px; top: 22px; width: 888px; height: 72px; border-radius: 3px; background: #2c2c2c; box-shadow: 0 2px 1px rgba(120,120,120,.6), 0 5px 22px rgba(0,0,0,.5); display: flex; align-items: center; padding: 0 20px; color: #fff; font-family: Inter, sans-serif; white-space: nowrap; }
.b-logo { width: 20px; height: 30px; margin-right: 32px; }
.banner p { margin: 0; width: 505px; font-size: 14px; letter-spacing: .020px; padding-bottom: 1px; }
.banner p b { letter-spacing: -.020px; }
.b-google { width: 161px; height: 32px; border: 1px solid #fff; border-radius: 6px; display: flex; align-items: center; gap: 10px; padding-left: 11px; font-size: 11px; }
.b-google svg { width: 14px; height: 14px; }
.b-sign { width: 118px; height: 32px; margin-left: 12px; border-radius: 6px; background: #029c4f; font-size: 11px; line-height: 32px; text-align: center; }

/* scrollbars and collaborator cursor */
.hbar { position: absolute; left: 187px; top: 917px; width: 319px; height: 6px; border-radius: 3px; background: rgba(110,110,110,.58); }
.vbar { position: absolute; left: 1837px; top: 449px; width: 6px; height: 57px; border-radius: 3px; background: #adadad; }
.cursor { position: absolute; left: 1803px; top: 465px; width: 13px; height: 13px; filter: drop-shadow(0 1px 2px rgba(0,0,0,.4)); }
.who { position: absolute; left: 1818px; top: 483px; height: 17px; padding-left: 5px; background: #ff00bf; color: #fff; font: 11px/17px Inter, sans-serif; }
```
